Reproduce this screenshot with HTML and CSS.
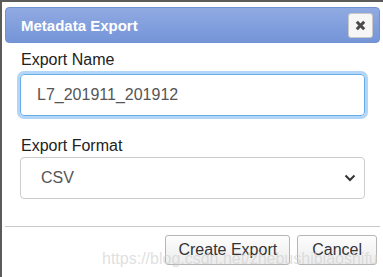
FILE: index.html
```html
<!DOCTYPE html>
<html lang="en">
  <head>
    <meta charset="UTF-8" />
    <title>Metadata Export</title>
    <link rel="stylesheet" href="styles.css">
  </head>
  <body>
    <div class="dialog">
      <div class="titlebar">
        <span class="title">Metadata Export</span>
        <button class="close" title="Close">
          <svg width="11" height="11" viewBox="0 0 11 11">
            <path d="M1.8 1.8 L9.2 9.2 M9.2 1.8 L1.8 9.2" stroke="#4a4a4a" stroke-width="3" />
          </svg>
        </button>
      </div>
      <div class="content">
        <label class="label" for="name">Export Name</label>
        <div class="field focused" id="name">L7_201911_201912</div>
        <label class="label second" for="format">Export Format</label>
        <div class="field select" id="format">
          <span>CSV</span>
          <svg width="12" height="8" viewBox="0 0 12 8">
            <path d="M1.5 1.5 L6 6 L10.5 1.5" fill="none" stroke="#333" stroke-width="2" />
          </svg>
        </div>
      </div>
      <div class="buttonpane">
        <button class="btn">Create Export</button>
        <button class="btn">Cancel</button>
        <span class="watermark">https://blog.csdn.net/zhebushibiaoshifu</span>
      </div>
    </div>
  </body>
</html>
```

FILE: styles.css
```css
body {
  margin: 0;
  font-family: "Liberation Sans", Arial, sans-serif;
  background: #fff;
}
.dialog {
  position: relative;
  width: 383px;
  height: 277px;
  box-sizing: border-box;
  border-top: 2px solid #5b5b5b;
  border-left: 2px solid #5b5b5b;
  padding: 5px 3px 0 3px;
  overflow: hidden;
}
.titlebar {
  display: flex;
  align-items: center;
  justify-content: space-between;
  height: 36px;
  box-sizing: border-box;
  border: 1px solid #7091d2;
  border-radius: 4px;
  background: linear-gradient(#90aae2, #7595d8);
  padding: 0 6px 0 15px;
}
.title {
  color: #fff;
  font-weight: bold;
  font-size: 15px;
}
.close {
  width: 25px;
  height: 25px;
  padding: 0;
  display: flex;
  align-items: center;
  justify-content: center;
  border: 1px solid #c8c8c8;
  border-radius: 3px;
  background: #f6f6f6;
}
.content {
  padding: 0 15px;
}
.label {
  display: block;
  font-size: 16px;
  line-height: 18px;
  color: #222;
  margin: 8px 0 5px 1px;
}
.label.second {
  margin: 21px 0 2px 1px;
}
.field {
  height: 42px;
  box-sizing: border-box;
  border: 1px solid #ccc;
  border-radius: 4px;
  padding: 0 16px;
  display: flex;
  align-items: center;
  font-size: 16px;
  color: #555;
}
.focused {
  border-color: #66afe9;
  box-shadow: 0 0 0 3px #b3d5f8;
}
.select {
  justify-content: space-between;
  padding: 0 8px 0 20px;
}
.buttonpane {
  margin-top: 27px;
  border-top: 1px solid #c8c8c8;
  display: flex;
  justify-content: flex-end;
  gap: 7px;
  padding: 8px 3px 0 0;
}
.btn {
  height: 30px;
  padding: 0 12px;
  font-family: "Liberation Sans", Arial, sans-serif;
  font-size: 16px;
  color: #333;
  border: 1px solid #b5b5b5;
  border-radius: 3px;
  background: linear-gradient(#fdfdfd, #ececec);
}
.btn:last-of-type {
  padding: 0 14px;
}
.watermark {
  position: absolute;
  left: 100px;
  top: 248px;
  font-size: 16px;
  color: rgba(210, 210, 210, 0.7);
  pointer-events: none;
}
```
